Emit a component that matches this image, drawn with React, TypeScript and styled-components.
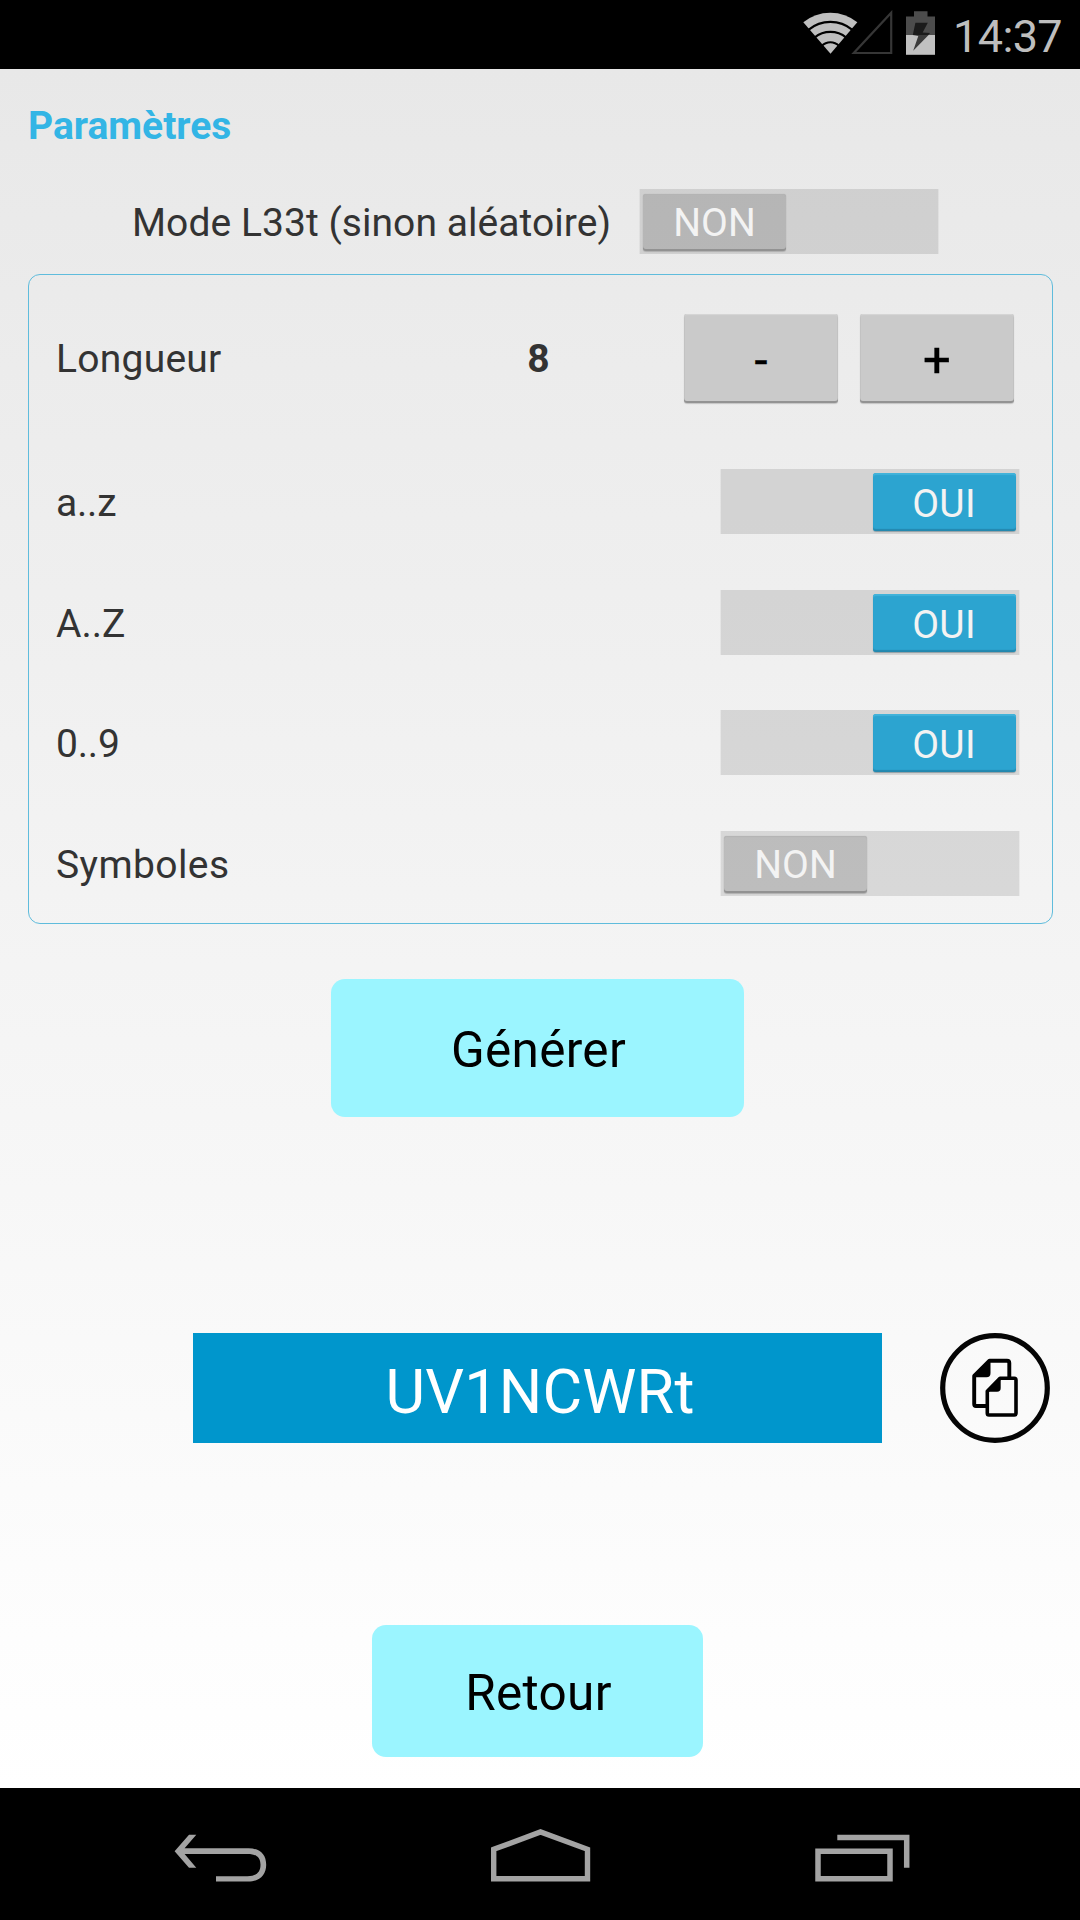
import React, { useState } from "react";
import styled, { createGlobalStyle, css } from "styled-components";

const GlobalStyle = createGlobalStyle`
  body { margin: 0; background: #000; }
  * { box-sizing: border-box; }
  button { border: 0; padding: 0; margin: 0; font-family: inherit; }
`;

const Screen = styled.div`
  width: 1080px;
  height: 1920px;
  display: flex;
  flex-direction: column;
  overflow: hidden;
  font-family: Roboto, "Liberation Sans", sans-serif;
  font-size: 39px;
  line-height: 46px;
  color: #333;
  white-space: nowrap;
`;

const StatusBar = styled.header`
  height: 69px;
  flex: none;
  display: flex;
  justify-content: flex-end;
  background: #000;
  padding: 10px 17px 0 0;
  svg { display: block; flex: none; }
`;

const Clock = styled.span`
  margin-left: 16px;
  margin-top: 1px;
  width: 110px;
  font-size: 45px;
  line-height: 52px;
  letter-spacing: -0.6px;
  color: #bebebe;
`;

const Content = styled.main`
  height: 1719px;
  flex: none;
  display: flex;
  flex-direction: column;
  padding: 34px 27px 0 28px;
  background: linear-gradient(#e8e8e8, #fff);
`;

const Title = styled.h1`
  margin: 0;
  font-size: 39px;
  line-height: 46px;
  font-weight: 700;
  color: #33b5e5;
`;

const ModeRow = styled.div`
  display: flex;
  align-items: center;
  height: 65px;
  margin: 40px 0 20px 104px;
  gap: 26px;
`;

const Label = styled.span<{ $width?: number; $spacing?: number; $drop?: number }>`
  padding-top: ${(p) => p.$drop ?? 2}px;
  width: ${(p) => (p.$width ? `${p.$width}px` : "auto")};
  letter-spacing: ${(p) => p.$spacing ?? 0}px;
`;

const Panel = styled.section`
  height: 650px;
  flex: none;
  border: 1px solid #5fbcdc;
  border-radius: 12px;
  padding: 39px 32px 0 27px;
`;

const Row = styled.div<{ $height: number; $top?: number }>`
  display: flex;
  align-items: center;
  height: ${(p) => p.$height}px;
  margin-top: ${(p) => p.$top ?? 0}px;
`;

const Value = styled.strong`
  width: 165px;
  padding: 1px 0 0 2px;
  text-align: center;
  font-weight: 700;
`;

const Steppers = styled.div`
  display: flex;
  gap: 22px;
  margin-left: auto;
  margin-right: 6px;
`;

const Stepper = styled.button<{ $size: number; $drop: number }>`
  width: 154px;
  height: 89px;
  padding-top: ${(p) => p.$drop}px;
  border-radius: 3px;
  background: #cacaca;
  box-shadow: inset 0 -2px 0 #939393, inset 0 1px 1px #d6d6d6, inset 1px 0 0 #c0c0c0,
    inset -1px 0 0 #c0c0c0, 0 1px 1px #c4c4c4;
  color: #000;
  font-size: ${(p) => p.$size}px;
  -webkit-text-stroke: 0.4px #000;
  line-height: 50px;
`;

const Track = styled.button<{ $on: boolean }>`
  width: 300px;
  height: 65px;
  flex: none;
  display: flex;
  align-items: flex-start;
  justify-content: ${(p) => (p.$on ? "flex-end" : "flex-start")};
  padding: ${(p) => (p.$on ? "4px 3px 0" : "5px 3px 0")};
  border: solid rgba(0, 0, 0, 0.04);
  border-width: 0 1px;
  background: rgba(0, 0, 0, 0.11);
  background-clip: padding-box;
`;

const Thumb = styled.span<{ $on: boolean }>`
  width: 143px;
  border-radius: 3px;
  text-align: center;
  font-size: 39px;
  color: #f3f3f3;
  ${(p) =>
    p.$on
      ? css`
          height: 58px;
          padding-right: 1px;
          line-height: 62px;
          letter-spacing: 0.3px;
          background: #2ca4d0;
          box-shadow: inset 0 2px 1px #42b3da, inset 0 -2px 1px #2488ae, 0 1px 1px #8f9ea5;
        `
      : css`
          height: 57px;
          line-height: 58px;
          background: rgba(0, 0, 0, 0.12);
          box-shadow: inset 0 -2px 0 #929292, inset 0 1px 1px #b4b4b4, 0 1px 1px #b0b0b0,
            0 0 1px #a8a8a8;
        `}
`;

const ActionButton = styled.button<{ $width: number; $height: number; $top: number; $left: number }>`
  flex: none;
  width: ${(p) => p.$width}px;
  height: ${(p) => p.$height}px;
  margin: ${(p) => `${p.$top}px 0 0 ${p.$left}px`};
  padding: 3px 0 0 2px;
  border-radius: 14px;
  background: #9bf5ff;
  color: #000;
  font-size: 49.5px;
  line-height: 58px;
  letter-spacing: 0.3px;
`;

const ResultRow = styled.div`
  display: flex;
  align-items: center;
  gap: 58px;
  height: 110px;
  margin: 216px 0 0 165px;
`;

const Result = styled.output`
  width: 689px;
  height: 110px;
  padding: 4px 0 0 5px;
  text-align: center;
  font-size: 61px;
  line-height: 110px;
  letter-spacing: 0.2px;
  background: #0096cc;
  color: #fff;
`;

const CopyButton = styled.button`
  width: 110px;
  height: 110px;
  background: none;
  svg { display: block; }
`;

const NavBar = styled.nav`
  height: 132px;
  flex: none;
  display: flex;
  align-items: flex-start;
  background: #000;
  padding: 38px 0 0 172px;
  svg { display: block; flex: none; }
`;

const NavSpacer = styled.span<{ $width: number }>`
  flex: none;
  width: ${(p) => p.$width}px;
`;

function Toggle({ initial }: { initial: boolean }) {
  const [on, setOn] = useState(initial);
  return (
    <Track $on={on} onClick={() => setOn(!on)}>
      <Thumb $on={on}>{on ? "OUI" : "NON"}</Thumb>
    </Track>
  );
}

const StatusIcons = () => (
  <svg width="136" height="48" viewBox="801 10 136 48">
    <path d="M830.5 53.7L803.3 22.3Q815 12.7 830.3 12.7T857.3 22.3Z" fill="#bfbfbf" />
    <g fill="none" stroke="#000" strokeWidth="2.1">
      <path d="M808.4 29.3Q818 21.3 830.4 21.3T852.4 29.3" transform="translate(0 .6)" />
      <path d="M814.5 37.4Q821.5 31.7 830.4 31.7T846.3 37.4" transform="translate(0 .2)" />
      <path d="M821.4 46.2Q825.5 42.3 830.4 42.3T839.4 46.2" />
    </g>
    <path d="M891.2 12.7V53H853.8Z" fill="none" stroke="#363636" strokeWidth="2.2" />
    <path d="M914 11.3H927.5V16.4H935V35H906V16.4H914Z" fill="#4c4c4c" />
    <path d="M906 35H935V54.8H906Z" fill="#c1c1c1" />
    <path d="M915.4 22.8H927.8L922.7 32.5L930 33L928.3 35H912.8Z" fill="#1b1b1b" />
    <path d="M912.8 35L918.3 36L913.2 50.8L928.6 35Z" fill="#3b3b3b" />
  </svg>
);

const CopyIcon = () => (
  <svg width="110" height="110" viewBox="0 0 110 110">
    <circle cx="55" cy="55" r="52.3" fill="none" stroke="#050505" strokeWidth="5.2" />
    <g fill="none" stroke="#000" strokeWidth="3.9" strokeLinejoin="round">
      <path d="M46 73H36Q34.2 73 34.2 71V43L49.5 27.7H67Q69.3 27.7 69.3 30V45" />
      <path d="M47.3 58.3L60 45.3H74.3Q76 45.3 76 47V80.2Q76 82 74.3 82H49Q47.3 82 47.3 80.2Z" strokeWidth="3.6" />
    </g>
    <path d="M34.5 42.8L50.5 27V40Q50.5 44.3 46.5 44.3H34.5Z" fill="#000" />
    <path d="M47 58.5L60.7 45V55Q60.7 58.8 57 58.8H47Z" fill="#000" />
  </svg>
);

const BackIcon = () => (
  <svg width="96" height="60" viewBox="172 1826 96 60" fill="#a3a3a3">
    <path d="M174.6 1851.2L189 1834.7H196.3L184.6 1848.3H248.5C260 1848.3 266.2 1854.5 266.2 1864.8S259.5 1881.6 248 1881.6H216V1876.2H247.5C256 1876.2 260.5 1872.5 260.5 1864.8S256 1854 247.5 1854H184.6L196.3 1867.8H189Z" />
  </svg>
);

const HomeIcon = () => (
  <svg width="104" height="60" viewBox="489 1826 104 60">
    <path d="M493.7 1849.3L540.5 1832L587.5 1849.3V1878.8H493.7Z" fill="none" stroke="#a3a3a3" strokeWidth="5.4" />
  </svg>
);

const RecentsIcon = () => (
  <svg width="100" height="60" viewBox="812 1826 100 60">
    <g fill="none" stroke="#a3a3a3" strokeWidth="5.5">
      <path d="M818 1851.2H890V1878.8H818Z" />
      <path d="M837.3 1837.5H906.7V1867.8" />
    </g>
  </svg>
);

export default function App() {
  const [length, setLength] = useState(8);
  return (
    <>
      <GlobalStyle />
      <Screen>
        <StatusBar>
          <StatusIcons />
          <Clock>14:37</Clock>
        </StatusBar>
        <Content>
          <Title>Paramètres</Title>
          <ModeRow>
            <Label $width={481} $spacing={0.05}>
              Mode L33t (sinon aléatoire)
            </Label>
            <Toggle initial={false} />
          </ModeRow>
          <Panel>
            <Row $height={89}>
              <Label $width={399} $spacing={0.25} $drop={0}>
                Longueur
              </Label>
              <Value>{length}</Value>
              <Steppers>
                <Stepper $size={47} $drop={3} onClick={() => setLength(length - 1)}>
                  -
                </Stepper>
                <Stepper $size={49} $drop={3} onClick={() => setLength(length + 1)}>
                  +
                </Stepper>
              </Steppers>
            </Row>
            <Row $height={65} $top={66}>
              <Label $width={664} $spacing={-0.2}>
                a..z
              </Label>
              <Toggle initial={true} />
            </Row>
            <Row $height={65} $top={56}>
              <Label $width={664}>A..Z</Label>
              <Toggle initial={true} />
            </Row>
            <Row $height={65} $top={55}>
              <Label $width={664} $spacing={-0.2}>
                0..9
              </Label>
              <Toggle initial={true} />
            </Row>
            <Row $height={65} $top={56}>
              <Label $width={664} $spacing={0.4}>
                Symboles
              </Label>
              <Toggle initial={false} />
            </Row>
          </Panel>
          <ActionButton $width={413} $height={138} $top={55} $left={303}>
            Générer
          </ActionButton>
          <ResultRow>
            <Result>UV1NCWRt</Result>
            <CopyButton aria-label="Copier">
              <CopyIcon />
            </CopyButton>
          </ResultRow>
          <ActionButton $width={331} $height={132} $top={182} $left={344}>
            Retour
          </ActionButton>
        </Content>
        <NavBar>
          <BackIcon />
          <NavSpacer $width={221} />
          <HomeIcon />
          <NavSpacer $width={219} />
          <RecentsIcon />
        </NavBar>
      </Screen>
    </>
  );
}
